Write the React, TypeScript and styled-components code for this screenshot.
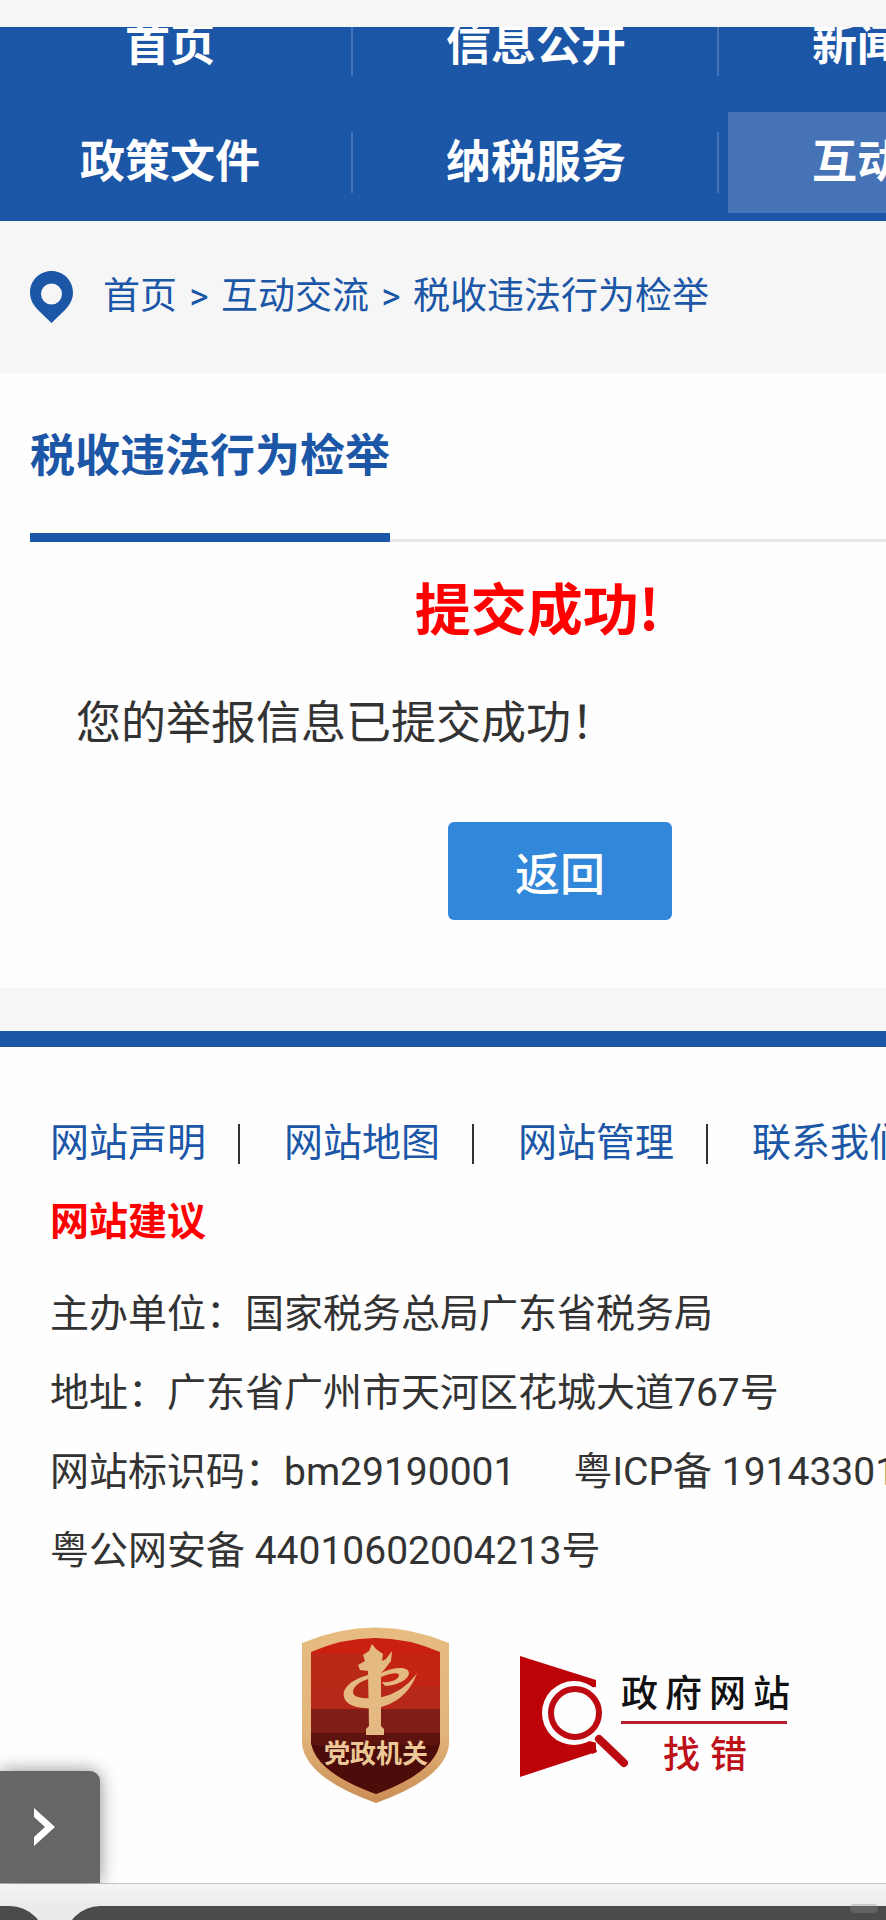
import React from "react";
import styled, { createGlobalStyle } from "styled-components";

const blue = "#1b56a7";
const ink = "#333";
const pale = "#f6f6f6";

const GlobalStyle = createGlobalStyle`
  * { box-sizing: border-box; }
  body {
    margin: 0;
    background: #fefefe;
    color: ${ink};
    font-family: Roboto, "Noto Sans CJK SC", sans-serif;
    overflow-x: hidden;
  }
  a { color: inherit; text-decoration: none; }
  h1, h2, p, ul, ol { margin: 0; padding: 0; font-weight: normal; }
  ul, ol { list-style: none; }
`;

const Page = styled.div`
  overflow: hidden;
`;

const TopStrip = styled.div`
  height: 27px;
  background: ${pale};
`;

const Nav = styled.nav`
  background: ${blue};
  overflow: hidden;
  padding-bottom: 8px;
`;

const NavRows = styled.div`
  display: flex;
  flex-direction: column;
  gap: 16px;
  margin: -32px 0 0 -4px;
`;

const NavRow = styled.ul`
  display: flex;
`;

const NavCell = styled.li`
  display: flex;
  align-items: center;
  flex: none;
`;

const NavLink = styled.a<{ $active?: boolean }>`
  width: 348px;
  line-height: 101px;
  text-align: center;
  font-size: 45px;
  font-weight: 700;
  color: #fff;
  background: ${(p) => (p.$active ? "#4673b5" : "transparent")};
`;

const NavDivider = styled.span`
  width: 2px;
  height: 61px;
  margin: 0 9px 0 7px;
  background: #4673b5;
`;

const Breadcrumb = styled.nav`
  display: flex;
  align-items: center;
  height: 152px;
  padding-left: 30px;
  background: ${pale};
  color: ${blue};
`;

const Crumbs = styled.ol`
  display: flex;
  margin-left: 30px;
  font-size: 37px;
  line-height: 48px;
  white-space: nowrap;
`;

const CrumbArrow = styled.span`
  display: inline-block;
  width: 44px;
  text-align: center;
`;

const TitleBar = styled.header`
  display: flex;
  align-items: flex-end;
  padding-left: 30px;
`;

const Title = styled.h1`
  padding-top: 48px;
  height: 169px;
  font-size: 45px;
  line-height: 72px;
  font-weight: 700;
  color: ${blue};
  border-bottom: 9px solid ${blue};
  white-space: nowrap;
`;

const TitleRule = styled.span`
  flex: 1;
  height: 3px;
  background: #e8e8e8;
`;

const Result = styled.section`
  padding-bottom: 68px;
`;

const ResultHeading = styled.h2`
  padding: 28px 0 0 188px;
  text-align: center;
  font-family: "Noto Sans CJK SC", sans-serif;
  font-size: 56px;
  line-height: 72px;
  font-weight: 700;
  color: #fe0000;
`;

const ResultMessage = styled.p`
  padding: 46px 0 0 76px;
  font-size: 45px;
  line-height: 72px;
`;

const ResultActions = styled.div`
  display: flex;
  justify-content: center;
  padding: 62px 0 0 234px;
`;

const BackButton = styled.button`
  width: 224px;
  height: 98px;
  border: 0;
  border-radius: 6px;
  background: #3187d9;
  color: #fff;
  font: 500 45px "Noto Sans CJK SC", sans-serif;
`;

const Gap = styled.div`
  height: 43px;
  background: ${pale};
`;

const Footer = styled.footer`
  position: relative;
  border-top: 16px solid ${blue};
  border-bottom: 1px solid #c8c8c8;
  padding: 57px 0 80px 50px;
  font-size: 39px;
  line-height: 79px;
  white-space: nowrap;
`;

const FooterLinks = styled.ul`
  display: flex;
  color: ${blue};
`;

const FooterItem = styled.li`
  display: flex;
  align-items: center;
`;

const Bar = styled.span`
  width: 2px;
  height: 40px;
  margin: 0 44px 0 32px;
  background: ${ink};
`;

const Suggest = styled.a`
  display: block;
  font-weight: 700;
  color: #fe0000;
`;

const Info = styled.div`
  padding-top: 13px;
`;

const InfoLine = styled.p`
  display: flex;
  gap: 58px;
`;

const Badges = styled.div`
  display: flex;
  align-items: center;
  gap: 71px;
  padding: 36px 0 0 252px;
  svg { display: block; flex: none; }
`;

const SideTab = styled.button`
  position: absolute;
  left: 0;
  bottom: 0;
  display: flex;
  align-items: center;
  width: 100px;
  height: 112px;
  padding: 0 0 0 33px;
  border: 0;
  border-radius: 0 10px 0 0;
  background: #666;
  box-shadow: 0 0 18px rgba(0, 0, 0, 0.45);
`;

const BrowserBar = styled.div`
  position: relative;
  display: flex;
  gap: 20px;
  height: 36px;
  padding-top: 22px;
  overflow: hidden;
  background: linear-gradient(#f5f5f5, #ebebeb 21px);
`;

const Pill = styled.span<{ $wide?: boolean }>`
  flex: ${(p) => (p.$wide ? "1" : "none")};
  width: 45px;
  height: 70px;
  margin-right: ${(p) => (p.$wide ? "-40px" : "0")};
  border-radius: ${(p) => (p.$wide ? "35px" : "0 35px 35px 0")};
  background: #4b4b4b;
`;

const Mark = styled.span`
  position: absolute;
  right: 8px;
  top: 20px;
  width: 28px;
  height: 9px;
  border-radius: 5px;
  background: rgba(140, 140, 140, 0.35);
`;

const PinIcon = () => (
  <svg width="43" height="52" viewBox="0 0 43 52" aria-hidden="true">
    <path
      fill={blue}
      fillRule="evenodd"
      d="M21.500 0C9.500 0 0 9.500 0 21.500C0 29 3.500 34 8 39L21.500 52L35 39C39.500 34 43 29 43 21.500C43 9.500 33.500 0 21.500 0ZM21.500 12.500A10.500 10.500 0 1 1 21.500 33.500A10.500 10.500 0 1 1 21.500 12.500Z"
    />
  </svg>
);

const ShieldBadge = () => (
  <svg width="147" height="176" viewBox="0 0 147 176" role="img" aria-label="党政机关">
    <defs>
      <linearGradient id="gold" x1="0" y1="0" x2="0" y2="1">
        <stop offset="0" stopColor="#e6bc80" />
        <stop offset="0.6" stopColor="#e2b47a" />
        <stop offset="1" stopColor="#c98d55" />
      </linearGradient>
      <clipPath id="face">
        <path d="M9 25Q73 -3 138 25V115Q134 145 74 167Q13 145 9 115Z" />
      </clipPath>
    </defs>
    <path fill="url(#gold)" d="M0 16Q73 -15 147 16V117Q144 151 74 176Q4 151 0 117Z" />
    <g clipPath="url(#face)">
      <rect width="147" height="176" fill="#c9200f" />
      <rect y="27" width="147" height="60" fill="#b92918" />
      <rect x="66" y="27" width="81" height="60" fill="#c42414" />
      <rect y="59" width="147" height="23" fill="#b62818" />
      <rect y="82" width="147" height="24" fill="#7f1d16" />
      <rect y="106" width="147" height="70" fill="#4c0c0a" />
      <rect y="106" width="147" height="12" fill="#5f130f" />
    </g>
    <g fill="#e5b982">
      <path d="M66 44L58 43L56 38L63 34L61 28L67 24L70 17L74 22L81 27L80 34L84 32L90 24L89 34L82 43L79 46V99L82 102V108H64V102L67 99Z" />
      <path d="M66 48C49 53 40 61 42 70C44 79 57 82 72 81C94 79 109 64 115 46C106 59 91 70 72 71C59 72 51 70 51 65C51 60 57 55 66 52Z" />
      <path d="M79 46C92 40 106 39 107 46C107 52 97 58 83 59L80 55C90 56 97 52 97 48C97 45 88 46 79 50Z" />
    </g>
    <text
      x="74"
      y="136"
      textAnchor="middle"
      fontFamily="Noto Sans CJK SC, sans-serif"
      fontSize="26"
      fontWeight="700"
      fill="#ecc797"
    >
      党政机关
    </text>
  </svg>
);

const ErrorBadge = () => (
  <svg width="272" height="126" viewBox="0 -4 272 126" role="img" aria-label="政府网站找错">
    <path fill="#bd0307" d="M0 0L76 24V96L0 121Z" />
    <path fill="#fefefe" d="M60 34L80 30V88L66 84L60 70Z" />
    <circle cx="54" cy="57" r="32" fill="#fefefe" />
    <path fill="#bd0307" d="M70 89L74 86L77 96L72 98Z" />
    <circle cx="55" cy="57" r="24" fill="#fefefe" stroke="#bd0a12" strokeWidth="6" />
    <path d="M79 83L104 107" stroke="#bd0a12" strokeWidth="8" strokeLinecap="round" />
    <g fontFamily="Noto Sans CJK SC, sans-serif" fontSize="37" fontWeight="500">
      <text x="101 145 189 233" y="51" fill="#111">政府网站</text>
      <text x="143 190" y="112" fill="#bd1019">找错</text>
    </g>
    <rect x="101" y="65" width="166" height="3" fill="#b71f2b" />
  </svg>
);

const navRows = [
  ["首页", "信息公开", "新闻动态"],
  ["政策文件", "纳税服务", "互动交流"],
];
const crumbs = ["首页", "互动交流", "税收违法行为检举"];
const footerLinks = ["网站声明", "网站地图", "网站管理", "联系我们"];
const infoLines = [
  ["主办单位：国家税务总局广东省税务局"],
  ["地址：广东省广州市天河区花城大道767号"],
  ["网站标识码：bm29190001", "粤ICP备 19143301"],
  ["粤公网安备 44010602004213号"],
];

export default function App() {
  return (
    <Page lang="zh-CN">
      <GlobalStyle />
      <TopStrip />
      <Nav aria-label="主导航">
        <NavRows>
          {navRows.map((row, r) => (
            <NavRow key={r}>
              {row.map((label, i) => (
                <NavCell key={label}>
                  <NavLink href="#" $active={label === "互动交流"}>
                    {label}
                  </NavLink>
                  {i < row.length - 1 && <NavDivider />}
                </NavCell>
              ))}
            </NavRow>
          ))}
        </NavRows>
      </Nav>
      <Breadcrumb aria-label="当前位置">
        <PinIcon />
        <Crumbs>
          {crumbs.map((label, i) => (
            <li key={label}>
              {i > 0 && <CrumbArrow>&gt;</CrumbArrow>}
              <a href="#">{label}</a>
            </li>
          ))}
        </Crumbs>
      </Breadcrumb>
      <main>
        <TitleBar>
          <Title>税收违法行为检举</Title>
          <TitleRule />
        </TitleBar>
        <Result>
          <ResultHeading>提交成功!</ResultHeading>
          <ResultMessage>您的举报信息已提交成功！</ResultMessage>
          <ResultActions>
            <BackButton type="button">返回</BackButton>
          </ResultActions>
        </Result>
      </main>
      <Gap />
      <Footer>
        <FooterLinks>
          {footerLinks.map((label, i) => (
            <FooterItem key={label}>
              <a href="#">{label}</a>
              {i < footerLinks.length - 1 && <Bar />}
            </FooterItem>
          ))}
        </FooterLinks>
        <Suggest href="#">网站建议</Suggest>
        <Info>
          {infoLines.map((parts) => (
            <InfoLine key={parts[0]}>
              {parts.map((part) => (
                <span key={part}>{part}</span>
              ))}
            </InfoLine>
          ))}
        </Info>
        <Badges>
          <ShieldBadge />
          <ErrorBadge />
        </Badges>
        <SideTab type="button" aria-label="展开">
          <svg width="22" height="40" viewBox="0 0 22 40" aria-hidden="true">
            <path d="M1 1L22 20L1 39V30L12 20L1 10Z" fill="#fff" />
          </svg>
        </SideTab>
      </Footer>
      <BrowserBar>
        <Pill />
        <Pill $wide />
        <Mark />
      </BrowserBar>
    </Page>
  );
}
